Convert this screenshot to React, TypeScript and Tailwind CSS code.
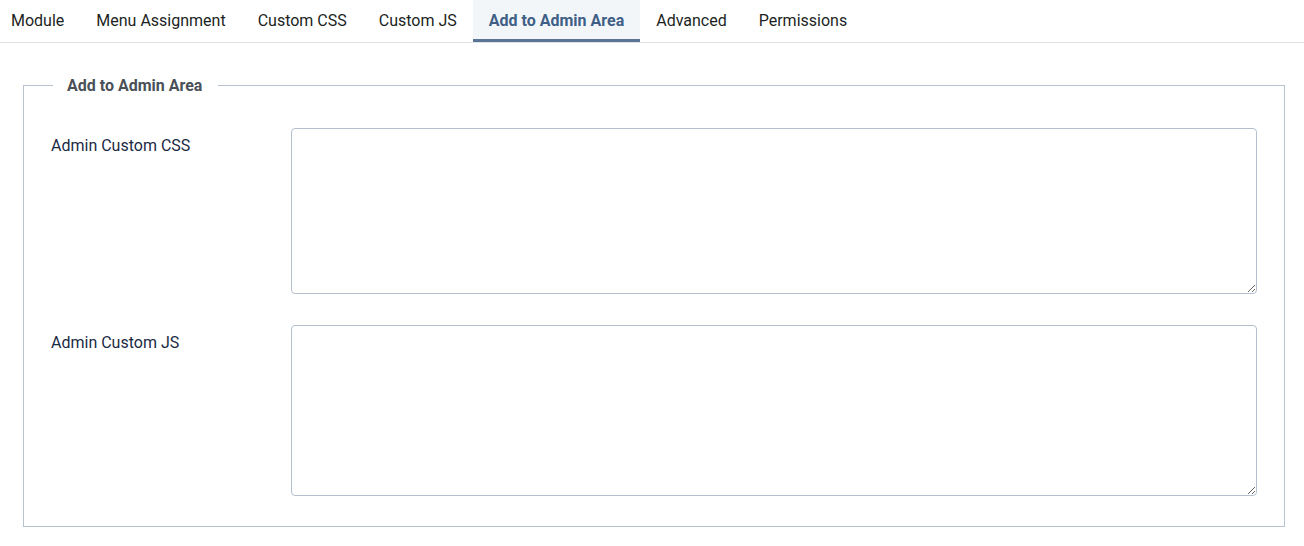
import React from "react";

const tabs = [
  "Module",
  "Menu Assignment",
  "Custom CSS",
  "Custom JS",
  "Add to Admin Area",
  "Advanced",
  "Permissions",
];

const ACTIVE = "Add to Admin Area";

function TabBar() {
  return (
    <div className="border-b border-[#dfe3e7] h-[43px]">
      <div className="flex -ml-[5px] h-[42px]">
        {tabs.map((t) =>
          t === ACTIVE ? (
            <div
              key={t}
              className="flex items-center px-4 h-[42px] bg-[#f3f6f9] border-b-[3px] border-[#5b7596] pt-[2px] font-bold text-[#3f5f86]"
            >
              {t}
            </div>
          ) : (
            <div
              key={t}
              className="flex items-center px-4 h-[42px] pb-[1px] text-[#1c1f23]"
            >
              {t}
            </div>
          )
        )}
      </div>
    </div>
  );
}

function FieldRow({
  label,
  height,
}: {
  label: string;
  height: string;
}) {
  return (
    <div className="flex">
      <label className="w-[240px] shrink-0 pt-[6px] leading-6 text-[#1b2a44]">
        {label}
      </label>
      <textarea
        className={`w-[966px] ${height} rounded-[4px] border border-[#b4c0cd] bg-white outline-none`}
      />
    </div>
  );
}

export default function App() {
  return (
    <div
      className="w-[1304px] h-[546px] bg-white text-[16px] overflow-hidden"
      style={{ fontFamily: "Roboto, 'Noto Sans', sans-serif" }}
    >
      <TabBar />
      <fieldset className="ml-[23px] mt-[30px] w-[1261px] border border-[#b8c3cf]">
        <legend className="ml-[29px] pl-[14px] pr-[16px] leading-6 font-bold text-[#4a5058]">
          <span className="relative top-px">Add to Admin Area</span>
        </legend>
        <div className="px-[27px] pt-[31px] pb-[30px] flex flex-col gap-[31px]">
          <FieldRow label="Admin Custom CSS" height="h-[166px]" />
          <FieldRow label="Admin Custom JS" height="h-[171px]" />
        </div>
      </fieldset>
    </div>
  );
}
